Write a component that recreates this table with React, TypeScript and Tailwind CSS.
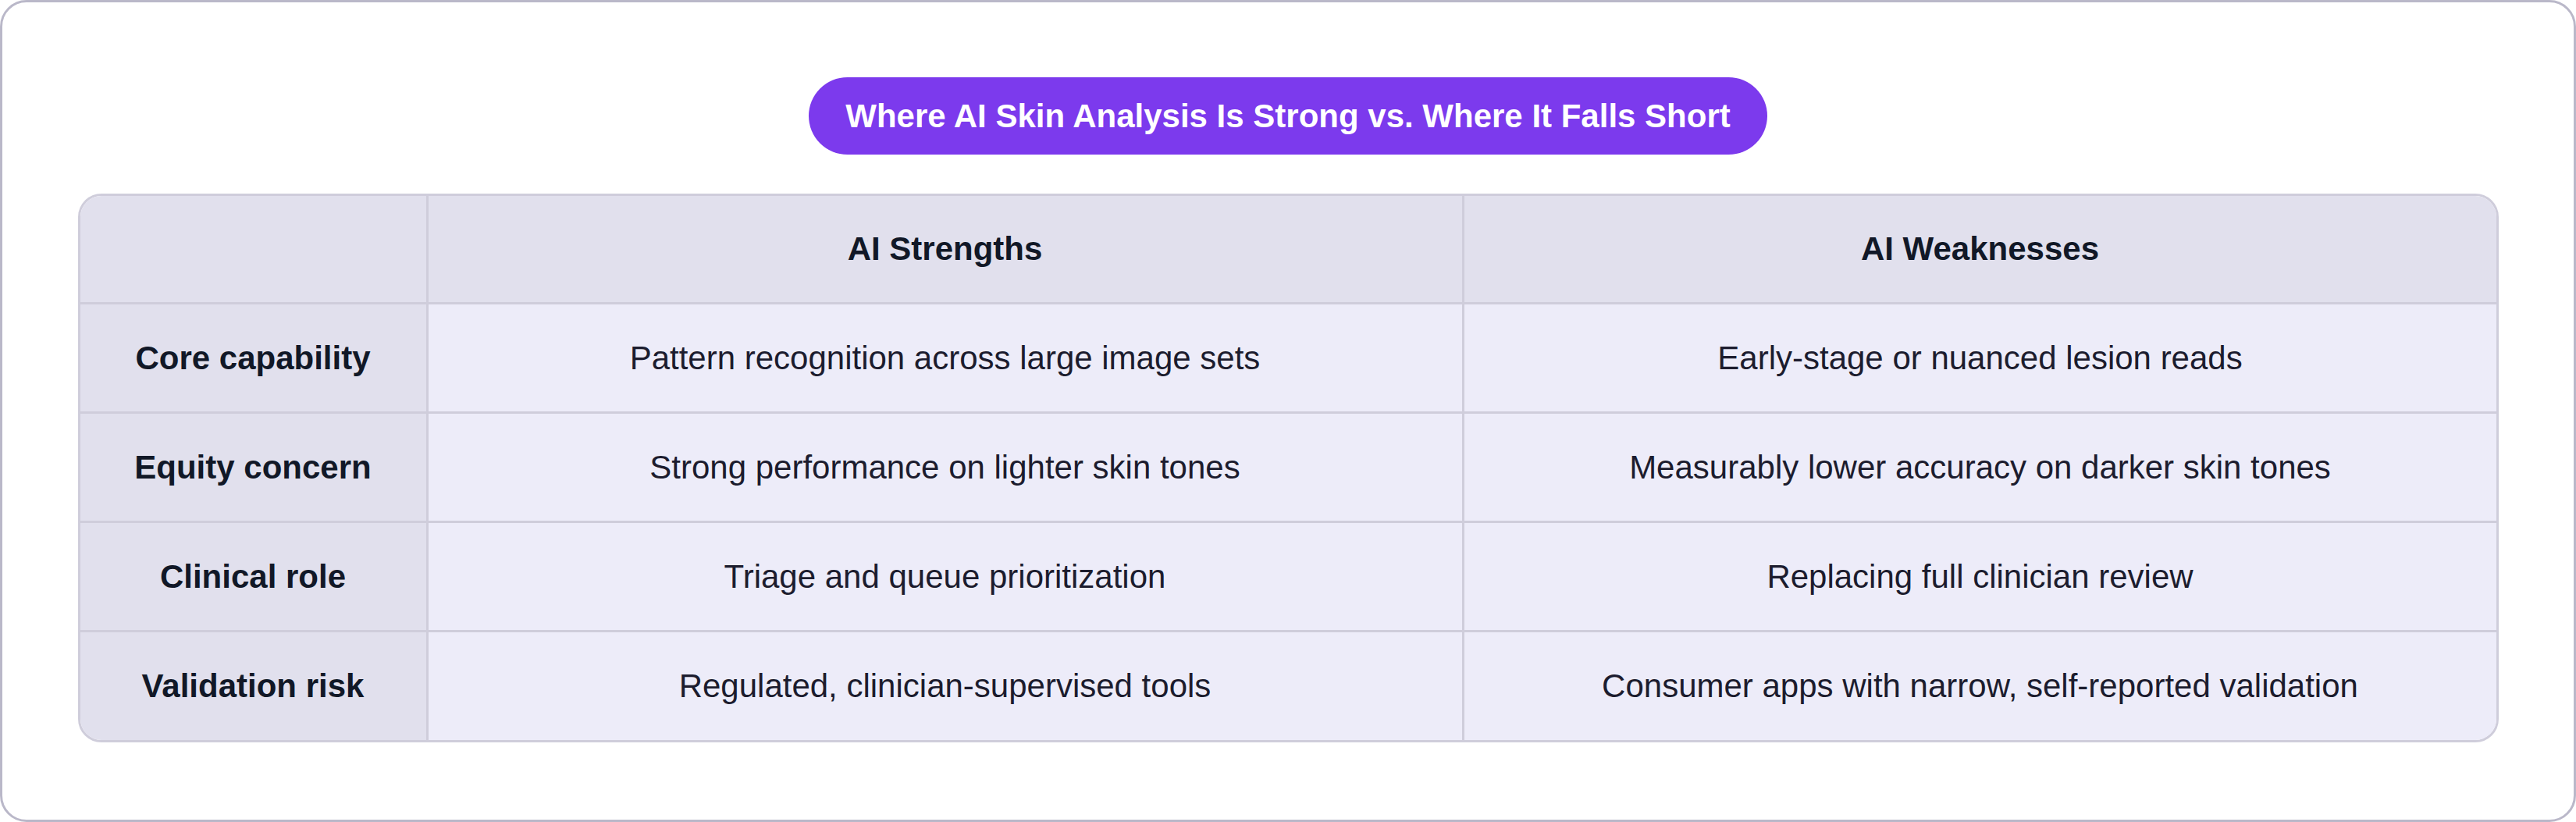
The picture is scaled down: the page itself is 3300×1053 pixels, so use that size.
import React from "react";

const rows = [
  ["Core capability", "Pattern recognition across large image sets", "Early-stage or nuanced lesion reads"],
  ["Equity concern", "Strong performance on lighter skin tones", "Measurably lower accuracy on darker skin tones"],
  ["Clinical role", "Triage and queue prioritization", "Replacing full clinician review"],
  ["Validation risk", "Regulated, clinician-supervised tools", "Consumer apps with narrow, self-reported validation"],
];

export default function App() {
  return (
    <div className="w-[3300px] h-[1053px] bg-white border-[3px] border-[#bab8c9] rounded-[34px] flex flex-col items-center pt-[96px] font-['Liberation_Sans',Arial,sans-serif]">
      <div className="h-[99px] px-[47px] rounded-full bg-[#7c3aed] text-white font-bold text-[42px] flex items-center leading-none">
        Where AI Skin Analysis Is Strong vs. Where It Falls Short
      </div>
      <div className="mt-[50px] w-[3101px] border-[3px] border-[#cfcddb] rounded-[30px] overflow-hidden grid grid-cols-[446px_1327px_1fr] text-[42px] leading-none">
        <div className="h-[139px] bg-[#e1e0ed] border-r-[3px] border-b-[3px] border-[#cfcddb]" />
        <div className="h-[139px] bg-[#e1e0ed] border-r-[3px] border-b-[3px] border-[#cfcddb] flex items-center justify-center font-bold text-[#111827]">
          AI Strengths
        </div>
        <div className="h-[139px] bg-[#e1e0ed] border-b-[3px] border-[#cfcddb] flex items-center justify-center font-bold text-[#111827]">
          AI Weaknesses
        </div>
        {rows.map((r, i) => {
          const last = i === rows.length - 1;
          return (
            <React.Fragment key={r[0]}>
              <div
                className={
                  last
                    ? "h-[138px] bg-[#e1e0ed] border-r-[3px] border-[#cfcddb] flex items-center justify-center font-bold text-[#111827]"
                    : "h-[140px] bg-[#e1e0ed] border-r-[3px] border-b-[3px] border-[#cfcddb] flex items-center justify-center font-bold text-[#111827]"
                }
              >
                {r[0]}
              </div>
              <div
                className={
                  last
                    ? "h-[138px] bg-[#edecf9] border-r-[3px] border-[#cfcddb] flex items-center justify-center text-[#1c1c2e]"
                    : "h-[140px] bg-[#edecf9] border-r-[3px] border-b-[3px] border-[#cfcddb] flex items-center justify-center text-[#1c1c2e]"
                }
              >
                {r[1]}
              </div>
              <div
                className={
                  last
                    ? "h-[138px] bg-[#edecf9] flex items-center justify-center text-[#1c1c2e]"
                    : "h-[140px] bg-[#edecf9] border-b-[3px] border-[#cfcddb] flex items-center justify-center text-[#1c1c2e]"
                }
              >
                {r[2]}
              </div>
            </React.Fragment>
          );
        })}
      </div>
    </div>
  );
}
